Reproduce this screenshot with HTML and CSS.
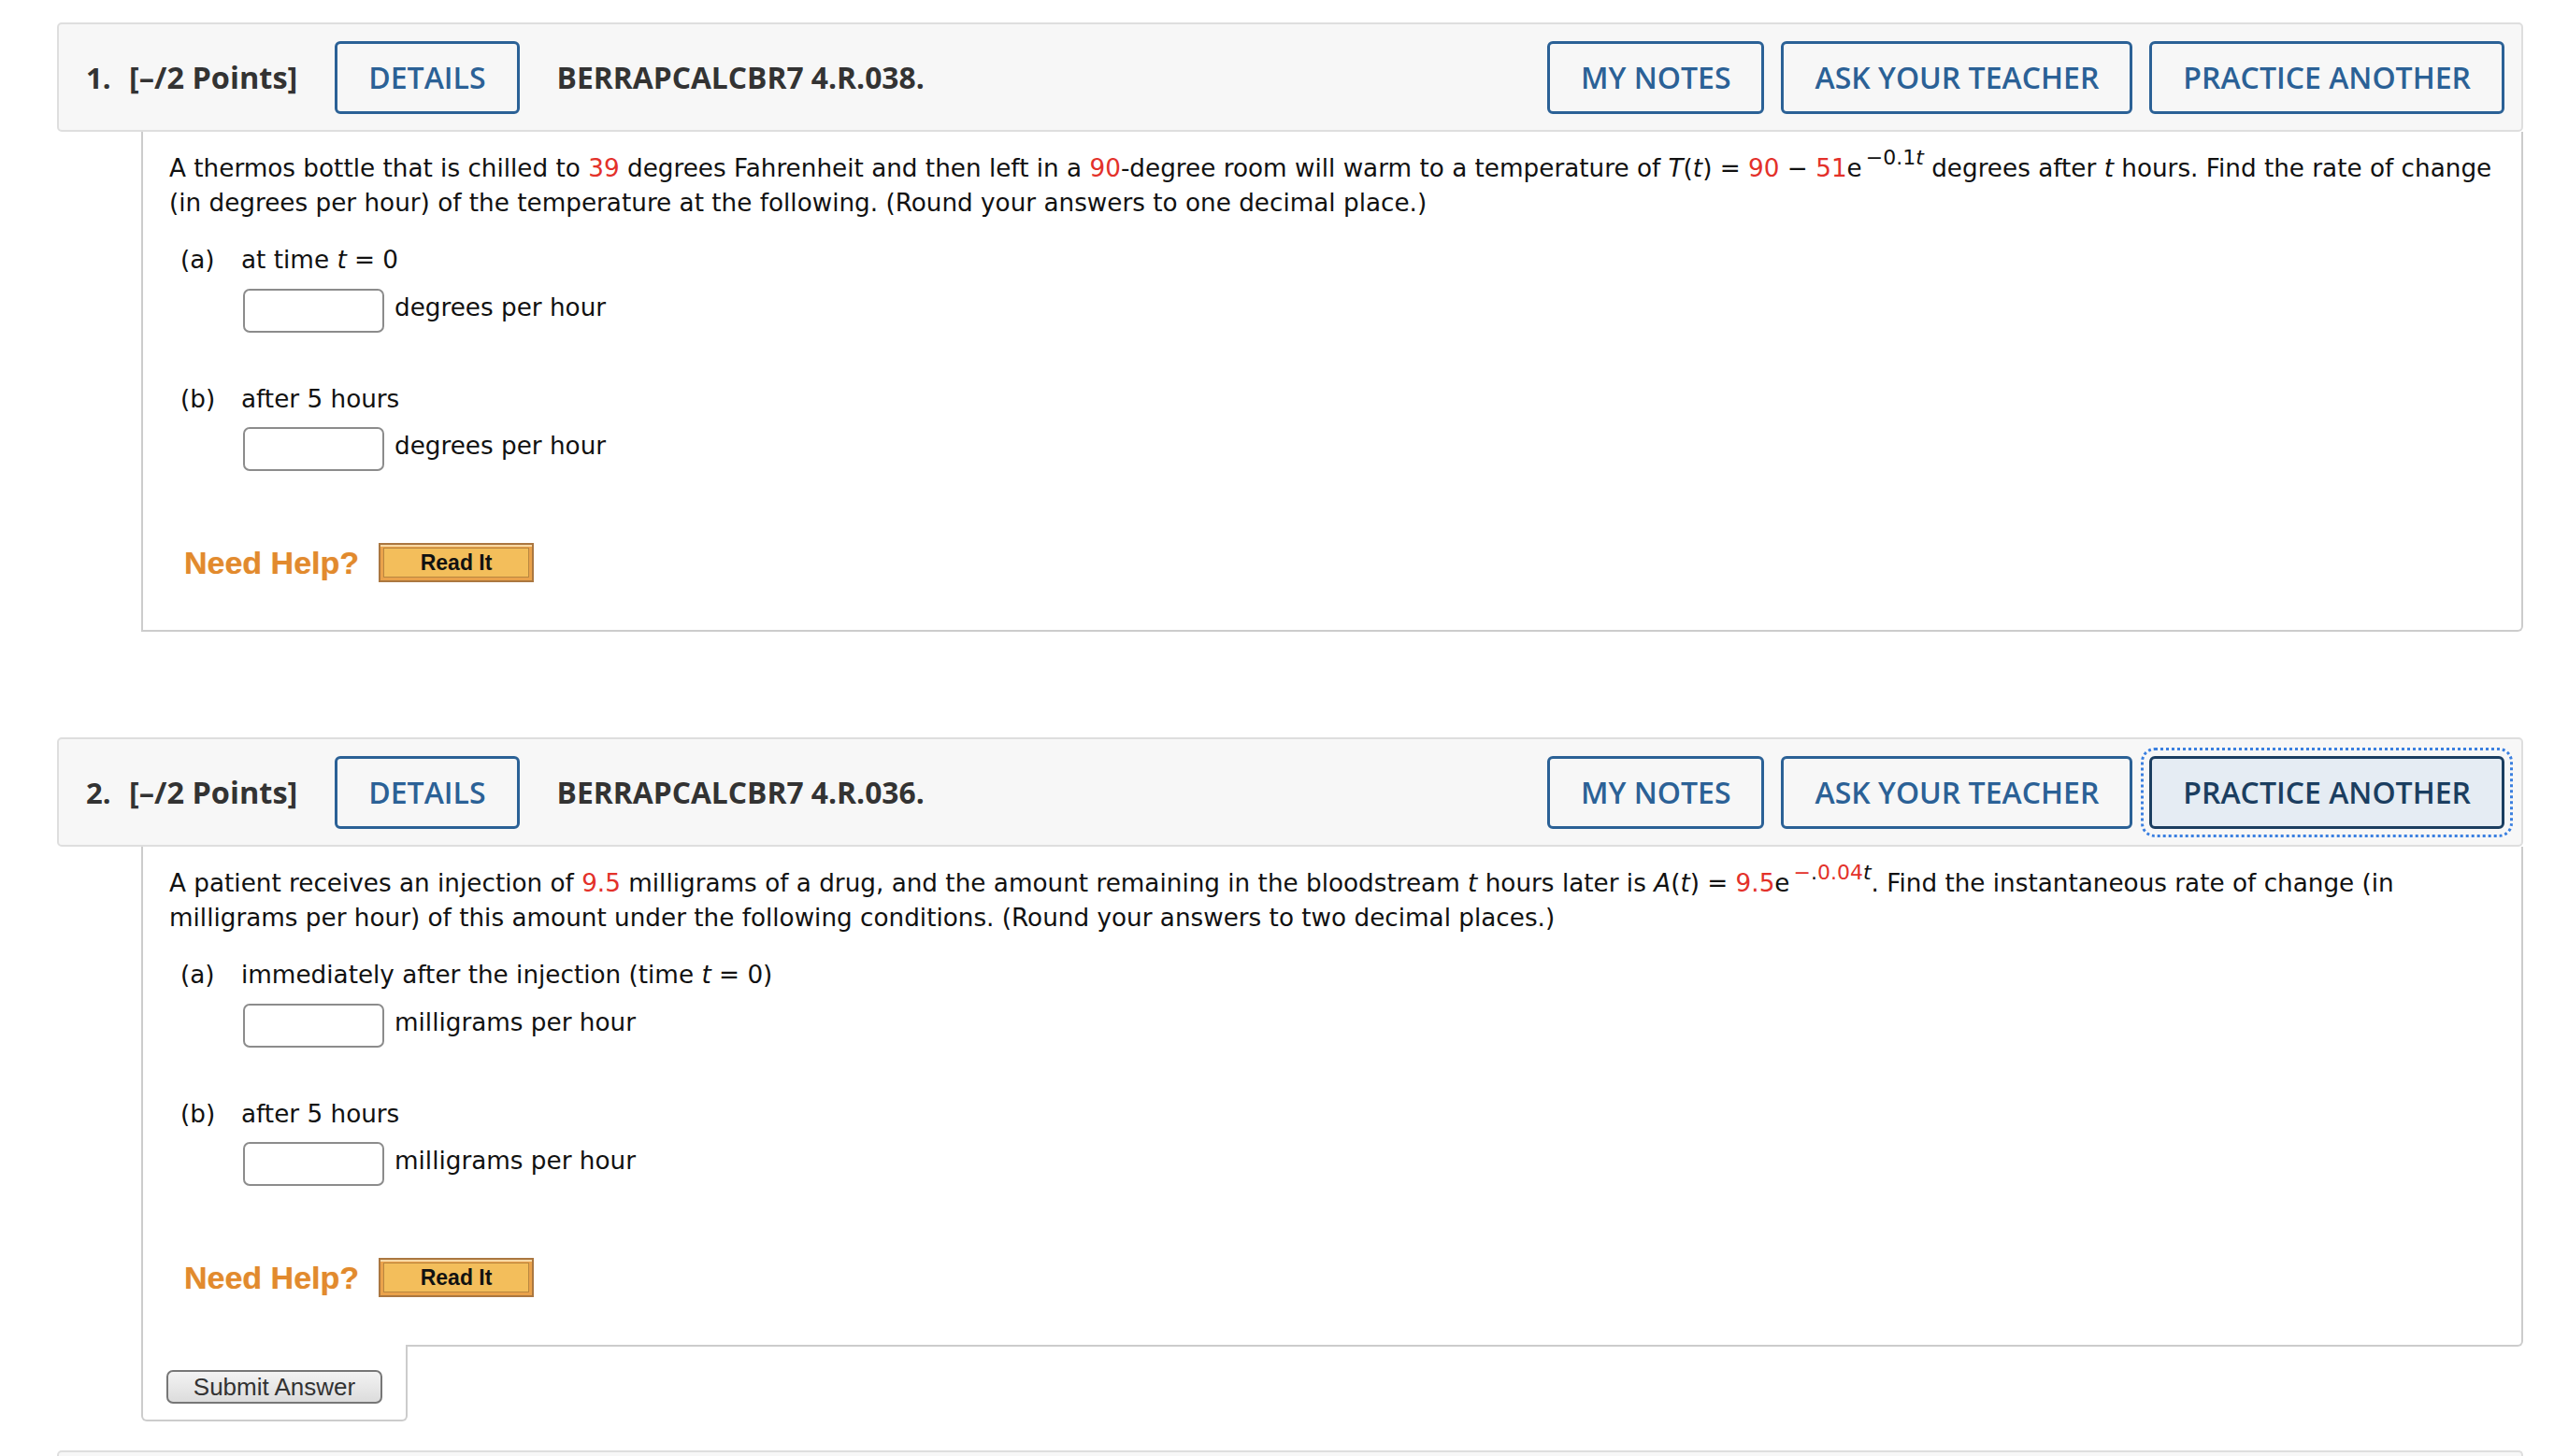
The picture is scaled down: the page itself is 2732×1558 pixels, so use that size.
FILE: index.html
```html
<!DOCTYPE html>
<html lang="en">
<head>
<meta charset="utf-8">
<title>Questions</title>
<link rel="stylesheet" href="styles.css">
</head>
<body>
<div class="page">
  <section class="question">
    <div class="qhead">
      <span class="qnum">1.</span>
      <span class="qpts">[–/2 Points]</span>
      <button class="hbtn details">DETAILS</button>
      <span class="qid">BERRAPCALCBR7 4.R.038.</span>
      <div class="hactions">
        <button class="hbtn">MY NOTES</button>
        <button class="hbtn">ASK YOUR TEACHER</button>
        <button class="hbtn">PRACTICE ANOTHER</button>
      </div>
    </div>
    <div class="qbody">
      <p class="qtext">A thermos bottle that is chilled to <span class="red">39</span> degrees Fahrenheit and then left in a <span class="red">90</span>-degree room will warm to a temperature of <i>T</i>(<i>t</i>) = <span class="red">90</span> − <span class="red">51</span>e<sup class="exp">−0.1<i>t</i></sup> degrees after <i>t</i> hours. Find the rate of change (in degrees per hour) of the temperature at the following. (Round your answers to one decimal place.)</p>
      <div class="part"><span class="plabel">(a)</span><span>at time <i>t</i> = 0</span></div>
      <div class="answer"><span class="ainput"></span><span class="unit">degrees per hour</span></div>
      <div class="part second"><span class="plabel">(b)</span><span>after 5 hours</span></div>
      <div class="answer second"><span class="ainput"></span><span class="unit">degrees per hour</span></div>
      <div class="help"><span class="need">Need Help?</span><button class="readit"><span class="readit-in">Read It</span></button></div>
    </div>
  </section>

  <section class="question gap">
    <div class="qhead">
      <span class="qnum">2.</span>
      <span class="qpts">[–/2 Points]</span>
      <button class="hbtn details">DETAILS</button>
      <span class="qid">BERRAPCALCBR7 4.R.036.</span>
      <div class="hactions">
        <button class="hbtn">MY NOTES</button>
        <button class="hbtn">ASK YOUR TEACHER</button>
        <button class="hbtn pressed">PRACTICE ANOTHER</button>
      </div>
    </div>
    <div class="qbody">
      <p class="qtext">A patient receives an injection of <span class="red">9.5</span> milligrams of a drug, and the amount remaining in the bloodstream <i>t</i> hours later is <i>A</i>(<i>t</i>) = <span class="red">9.5</span>e<sup class="exp"><span class="red">−</span>.<span class="red">0.04</span><i>t</i></sup>. Find the instantaneous rate of change (in milligrams per hour) of this amount under the following conditions. (Round your answers to two decimal places.)</p>
      <div class="part"><span class="plabel">(a)</span><span>immediately after the injection (time <i>t</i> = 0)</span></div>
      <div class="answer"><span class="ainput"></span><span class="unit">milligrams per hour</span></div>
      <div class="part second"><span class="plabel">(b)</span><span>after 5 hours</span></div>
      <div class="answer second"><span class="ainput"></span><span class="unit">milligrams per hour</span></div>
      <div class="help"><span class="need">Need Help?</span><button class="readit"><span class="readit-in">Read It</span></button></div>
    </div>
    <div class="submit-tab"><button class="submit">Submit Answer</button></div>
  </section>

  <div class="next-head"></div>
</div>
</body>
</html>
```
FILE: styles.css
```css
html, body {
  margin: 0;
  padding: 0;
  background: #fff;
  overflow: hidden;
}
.page {
  padding: 24px 33px 0 61px;
  font-family: "DejaVu Sans", Verdana, sans-serif;
  font-size: 26.25px;
  color: #111;
}
.question.gap {
  margin-top: 113px;
}
.qhead {
  display: flex;
  align-items: center;
  box-sizing: border-box;
  height: 117px;
  padding: 0 18px 0 29px;
  background: #f7f7f7;
  border: 2px solid #dedede;
  border-radius: 5px;
  font-family: "Open Sans", sans-serif;
  color: #333;
}
.qnum {
  font-weight: 700;
  font-size: 31px;
  width: 46px;
}
.qpts {
  font-weight: 700;
  font-size: 32.5px;
  margin-right: 40px;
}
.qid {
  font-weight: 700;
  font-size: 31.8px;
  margin-left: 40px;
}
.hbtn {
  box-sizing: border-box;
  height: 78px;
  padding: 0 33px;
  border: 3px solid #2b6196;
  border-radius: 6px;
  background: #f7f7f7;
  color: #2b6196;
  font-family: "Open Sans", sans-serif;
  font-size: 32px;
  font-weight: 600;
}
.hactions {
  display: flex;
  gap: 18px;
  margin-left: auto;
}
.hbtn.pressed {
  background: #e5ecf3;
  border-color: #1b3e60;
  color: #1b3e60;
  outline: 3px dotted #3a7fe0;
  outline-offset: 6px;
}
.qbody {
  margin-left: 90px;
  border: 2px solid #cccccc;
  border-top: none;
  border-bottom-right-radius: 6px;
  padding: 21px 28px 51px 28px;
}
.qtext {
  margin: 0 0 24px;
  line-height: 37px;
}
.red {
  color: #e3312a;
}
i {
  font-style: italic;
}
.exp {
  font-size: 22px;
  line-height: 0;
  vertical-align: 13px;
  margin-left: 4px;
}
.part {
  display: flex;
  padding-left: 12px;
  line-height: 37px;
}
.plabel {
  width: 65px;
}
.part.second {
  margin-top: 53px;
}
.answer {
  display: flex;
  align-items: center;
  gap: 11px;
  margin: 12px 0 0 79px;
}
.answer.second {
  margin-top: 11px;
}
.unit {
  padding-bottom: 7px;
}
.ainput {
  box-sizing: border-box;
  width: 151px;
  height: 47px;
  border: 2px solid #8c8c8c;
  border-radius: 7px;
  background: #fff;
}
.help {
  display: flex;
  align-items: center;
  gap: 21px;
  margin-top: 77px;
  padding-left: 16px;
}
.need {
  font-family: "Liberation Sans", Arial, sans-serif;
  font-weight: 700;
  font-size: 34px;
  color: #e28a2d;
  text-shadow: 0 0 1px rgba(226, 138, 45, 0.6);
}
.readit {
  box-sizing: border-box;
  width: 166px;
  height: 42px;
  padding: 3px;
  border: 2px solid #ab7740;
  border-radius: 0;
  background: #eaa24b;
  display: flex;
  box-shadow: inset 0 2px 0 #f7d9a6;
}
.readit-in {
  flex: 1;
  display: flex;
  align-items: center;
  justify-content: center;
  border: 1px solid #b9863f;
  background: #f3be5b;
  font-family: "Liberation Sans", Arial, sans-serif;
  font-weight: 700;
  font-size: 23px;
  color: #111;
}
.submit-tab {
  box-sizing: border-box;
  width: 285px;
  height: 82px;
  margin: -2px 0 0 90px;
  padding: 27px 0 0 25px;
  background: #fff;
  border: 2px solid #cccccc;
  border-top: none;
  border-radius: 0 0 6px 6px;
  position: relative;
}
.submit {
  box-sizing: border-box;
  width: 231px;
  height: 36px;
  border: 2px solid #777;
  border-radius: 7px;
  background: linear-gradient(#f3f3f3, #dcdcdc);
  font-family: "Liberation Sans", Arial, sans-serif;
  font-size: 26px;
  color: #333;
  padding: 0;
}
.next-head {
  margin-top: 31px;
  height: 20px;
  border: 2px solid #dedede;
  border-bottom: none;
  border-radius: 5px 5px 0 0;
  background: #f7f7f7;
}
```
